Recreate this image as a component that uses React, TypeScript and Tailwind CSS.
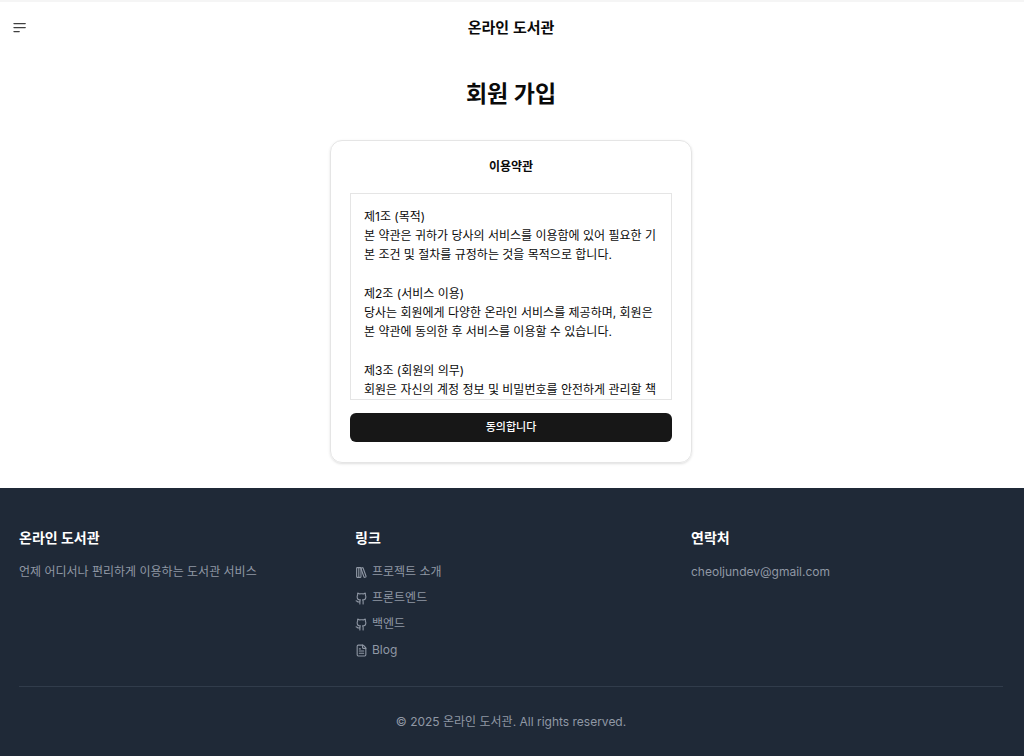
import { FileText, Github, LibraryBig } from "lucide-react";

const TERMS = [
  {
    title: "제1조 (목적)",
    body: "본 약관은 귀하가 당사의 서비스를 이용함에 있어 필요한 기본 조건 및 절차를 규정하는 것을 목적으로 합니다.",
  },
  {
    title: "제2조 (서비스 이용)",
    body: "당사는 회원에게 다양한 온라인 서비스를 제공하며, 회원은 본 약관에 동의한 후 서비스를 이용할 수 있습니다.",
  },
  {
    title: "제3조 (회원의 의무)",
    body: "회원은 자신의 계정 정보 및 비밀번호를 안전하게 관리할 책",
  },
];

const LINKS = [
  { label: "프로젝트 소개", Icon: LibraryBig },
  { label: "프론트엔드", Icon: Github },
  { label: "백엔드", Icon: Github },
  { label: "Blog", Icon: FileText },
];

function MenuIcon() {
  return (
    <svg width="14" height="12" viewBox="0 0 14 12" fill="none" stroke="currentColor" strokeWidth="1.4" strokeLinecap="round" aria-hidden="true">
      <path d="M1 1.6h11.2M1 5.6h11.2M1 9.6h5.2" />
    </svg>
  );
}

export default function App() {
  return (
    <div className="flex min-h-screen flex-col bg-white font-[Inter,'Noto_Sans_CJK_KR',sans-serif] text-neutral-950">
      <header className="grid h-[54px] grid-cols-[39px_1fr_39px] items-center border-t-2 border-neutral-100 pr-[2px]">
        <button aria-label="메뉴" className="flex justify-center text-neutral-700">
          <MenuIcon />
        </button>
        <a href="#" className="text-center text-[15px] leading-6 font-semibold">온라인 도서관</a>
      </header>
      <main className="flex flex-col items-center pr-[2px] pb-[25px]">
        <h1 className="mt-6 text-[23px] leading-8 font-bold">회원 가입</h1>
        <section className="mt-[30px] w-full max-w-[362px] rounded-xl border border-neutral-200 px-[19px] pb-5 shadow-sm">
          <h2 className="py-4 text-center text-xs leading-5 font-bold">이용약관</h2>
          <div className="flex h-[207px] flex-col gap-5 overflow-y-auto border border-neutral-200 px-[13px] pt-[13px] text-xs leading-[19px] break-all [scrollbar-width:none]">
            {TERMS.map(({ title, body }) => (
              <article key={title}>
                <h3>{title}</h3>
                <p>{body}</p>
              </article>
            ))}
          </div>
          <button className="mt-[13px] block h-[29px] w-full rounded-md bg-neutral-900 text-[11px] font-medium text-white">동의합니다</button>
        </section>
      </main>
      <footer className="flex-1 bg-[#1f2937] pt-10 pr-[21px] pl-[19px] text-xs leading-[18px] text-[#9098a5]">
        <div className="grid grid-cols-3 gap-6">
          <section>
            <h3 className="text-sm font-bold text-white">온라인 도서관</h3>
            <p className="mt-[15px]">언제 어디서나 편리하게 이용하는 도서관 서비스</p>
          </section>
          <section>
            <h3 className="text-sm font-bold text-white">링크</h3>
            <ul className="mt-[15px] flex flex-col gap-2">
              {LINKS.map(({ label, Icon }) => (
                <li key={label}>
                  <a href="#" className="flex h-[18px] items-center gap-1">
                    <Icon size={13} />
                    {label}
                  </a>
                </li>
              ))}
            </ul>
          </section>
          <section>
            <h3 className="text-sm font-bold text-white">연락처</h3>
            <p className="mt-[15px]">cheoljundev@gmail.com</p>
          </section>
        </div>
        <p className="mt-[27px] border-t border-[#313c4b] pt-[26px] text-center">© 2025 온라인 도서관. All rights reserved.</p>
      </footer>
    </div>
  );
}
